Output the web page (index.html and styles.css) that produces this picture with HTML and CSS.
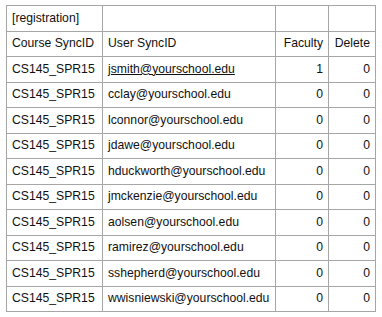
FILE: index.html
```html
<!DOCTYPE html>
<html>
<head>
<meta charset="utf-8">
<link rel="stylesheet" href="styles.css">
</head>
<body>
<div class="wrap">
<table class="grid">
<colgroup>
<col class="c1"><col class="c2"><col class="c3"><col class="c4">
</colgroup>
<tr><td>[registration]</td><td></td><td></td><td></td></tr>
<tr><td>Course SyncID</td><td>User SyncID</td><td class="num">Faculty</td><td class="num">Delete</td></tr>
<tr><td>CS145_SPR15</td><td><a class="link" href="#">jsmith@yourschool.edu</a></td><td class="num">1</td><td class="num">0</td></tr>
<tr><td>CS145_SPR15</td><td>cclay@yourschool.edu</td><td class="num">0</td><td class="num">0</td></tr>
<tr><td>CS145_SPR15</td><td>lconnor@yourschool.edu</td><td class="num">0</td><td class="num">0</td></tr>
<tr><td>CS145_SPR15</td><td>jdawe@yourschool.edu</td><td class="num">0</td><td class="num">0</td></tr>
<tr><td>CS145_SPR15</td><td>hduckworth@yourschool.edu</td><td class="num">0</td><td class="num">0</td></tr>
<tr><td>CS145_SPR15</td><td>jmckenzie@yourschool.edu</td><td class="num">0</td><td class="num">0</td></tr>
<tr><td>CS145_SPR15</td><td>aolsen@yourschool.edu</td><td class="num">0</td><td class="num">0</td></tr>
<tr><td>CS145_SPR15</td><td>ramirez@yourschool.edu</td><td class="num">0</td><td class="num">0</td></tr>
<tr><td>CS145_SPR15</td><td>sshepherd@yourschool.edu</td><td class="num">0</td><td class="num">0</td></tr>
<tr><td>CS145_SPR15</td><td>wwisniewski@yourschool.edu</td><td class="num">0</td><td class="num">0</td></tr>
</table>
</div>
</body>
</html>
```
FILE: styles.css
```css
html, body {
  margin: 0;
  padding: 0;
  background: #ffffff;
}
.wrap {
  padding: 5px 0 0 6px;
}
.grid {
  border-collapse: collapse;
  table-layout: fixed;
  width: 370px;
  font-family: "Liberation Sans", Arial, sans-serif;
  font-size: 12.2px;
  color: #111;
}
.c1 { width: 96px; }
.c2 { width: 173px; }
.c3 { width: 53px; }
.c4 { width: 47px; }
.grid td {
  border: 1px solid #a6a6a6;
  height: 24.5px;
  padding: 0 5px;
  white-space: nowrap;
  overflow: hidden;
  line-height: 15px;
  vertical-align: middle;
}
.grid td.num {
  text-align: right;
}
.link {
  color: #111;
  text-decoration: underline;
}
```
